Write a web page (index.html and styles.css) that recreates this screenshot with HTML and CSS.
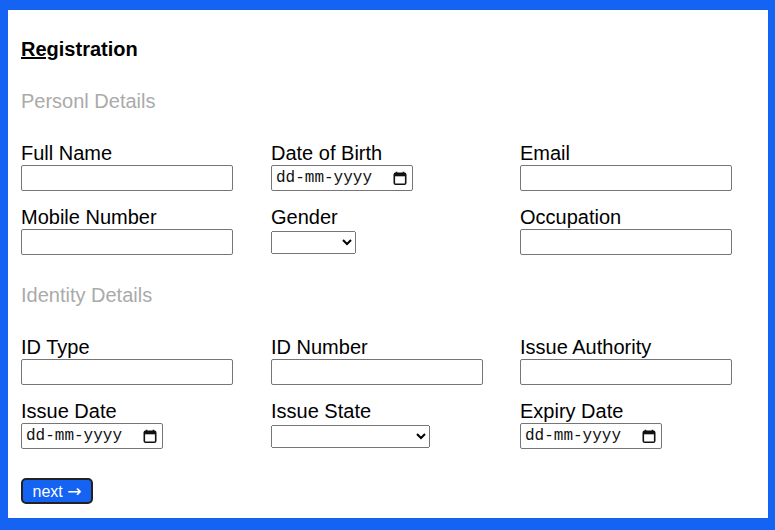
FILE: index.html
```html
<!DOCTYPE html>
<html>
<head>
<meta charset="utf-8">
<link rel="stylesheet" href="styles.css">
</head>
<body>
<div class="card">
  <h1 class="title"><u>Reg</u>istration</h1>
  <h2 class="section">Personl Details</h2>
  <div class="grid">
    <div class="field"><label>Full Name</label><input type="text" class="txt"></div>
    <div class="field"><label>Date of Birth</label>
      <div class="date"><input type="text" class="date-in" placeholder="dd-mm-yyyy"><svg class="cal" width="14" height="14" viewBox="0 0 14 14"><path d="M3.5 0.8v2.4M10.5 0.8v2.4" stroke="#111" stroke-width="1.6" fill="none"/><rect x="1.3" y="2.3" width="11.4" height="10.9" rx="1.3" stroke="#111" stroke-width="1.6" fill="none"/><rect x="1.3" y="2.3" width="11.4" height="3" fill="#111"/></svg></div>
    </div>
    <div class="field"><label>Email</label><input type="text" class="txt"></div>
    <div class="field"><label>Mobile Number</label><input type="text" class="txt"></div>
    <div class="field"><label>Gender</label><select class="sel-small"><option></option></select></div>
    <div class="field"><label>Occupation</label><input type="text" class="txt"></div>
  </div>
  <h2 class="section">Identity Details</h2>
  <div class="grid">
    <div class="field"><label>ID Type</label><input type="text" class="txt"></div>
    <div class="field"><label>ID Number</label><input type="text" class="txt"></div>
    <div class="field"><label>Issue Authority</label><input type="text" class="txt"></div>
    <div class="field"><label>Issue Date</label>
      <div class="date"><input type="text" class="date-in" placeholder="dd-mm-yyyy"><svg class="cal" width="14" height="14" viewBox="0 0 14 14"><path d="M3.5 0.8v2.4M10.5 0.8v2.4" stroke="#111" stroke-width="1.6" fill="none"/><rect x="1.3" y="2.3" width="11.4" height="10.9" rx="1.3" stroke="#111" stroke-width="1.6" fill="none"/><rect x="1.3" y="2.3" width="11.4" height="3" fill="#111"/></svg></div>
    </div>
    <div class="field"><label>Issue State</label><select class="sel-wide"><option></option></select></div>
    <div class="field"><label>Expiry Date</label>
      <div class="date"><input type="text" class="date-in" placeholder="dd-mm-yyyy"><svg class="cal" width="14" height="14" viewBox="0 0 14 14"><path d="M3.5 0.8v2.4M10.5 0.8v2.4" stroke="#111" stroke-width="1.6" fill="none"/><rect x="1.3" y="2.3" width="11.4" height="10.9" rx="1.3" stroke="#111" stroke-width="1.6" fill="none"/><rect x="1.3" y="2.3" width="11.4" height="3" fill="#111"/></svg></div>
    </div>
  </div>
  <button class="next">next <span class="arrow">&rarr;</span></button>
</div>
</body>
</html>
```
FILE: styles.css
```css
html, body {
  margin: 0;
  padding: 0;
  background: #1463f3;
}
body {
  font-family: "Liberation Sans", Arial, sans-serif;
}
.card {
  background: #fff;
  margin: 10px 7px 12px 8px;
  height: 508px;
  box-sizing: border-box;
  padding: 28px 13px 0 13px;
}
.title {
  font-size: 20px;
  font-weight: bold;
  margin: 0;
  line-height: 23px;
}
.section {
  font-size: 20px;
  font-weight: normal;
  color: #aaaaaa;
  margin: 29px 0 0 0;
  line-height: 23px;
}
.grid {
  display: grid;
  grid-template-columns: 250px 249px auto;
  row-gap: 15px;
  margin-top: 29px;
}
.field {
  display: flex;
  flex-direction: column;
  align-items: flex-start;
}
.field label {
  font-size: 20px;
  line-height: 23px;
  color: #000;
}
.txt {
  width: 212px;
  height: 26px;
  box-sizing: border-box;
  font-size: 16px;
  border: 1px solid #767676;
  border-radius: 2px;
  margin: 0;
}
.date {
  display: flex;
  align-items: center;
  width: 142px;
  height: 26px;
  box-sizing: border-box;
  border: 1px solid #767676;
  border-radius: 2px;
  padding: 0 5px 0 4px;
}
.date-in {
  flex: 1;
  width: 0;
  border: none;
  padding: 0;
  margin: 0;
  outline: none;
  font-family: "Liberation Mono", "Courier New", monospace;
  font-size: 16px;
  color: #000;
  background: transparent;
}
.date-in::placeholder {
  color: #111;
  opacity: 1;
}
.cal {
  flex: none;
  display: block;
}
.sel-small {
  width: 85px;
  height: 23px;
  margin-top: 2px;
}
.sel-wide {
  width: 159px;
  height: 23px;
  margin-top: 2px;
}
.next {
  margin-top: 29px;
  background: #1463f3;
  color: #fff;
  font-family: "Liberation Sans", Arial, sans-serif;
  font-size: 16px;
  border: 2px solid #222;
  border-radius: 5px;
  padding: 0 8px 0 8px;
  height: 26px;
  width: 72px;
  line-height: 20px;
}
.arrow {
  font-family: "DejaVu Sans", sans-serif;
  font-size: 17px;
}
```
